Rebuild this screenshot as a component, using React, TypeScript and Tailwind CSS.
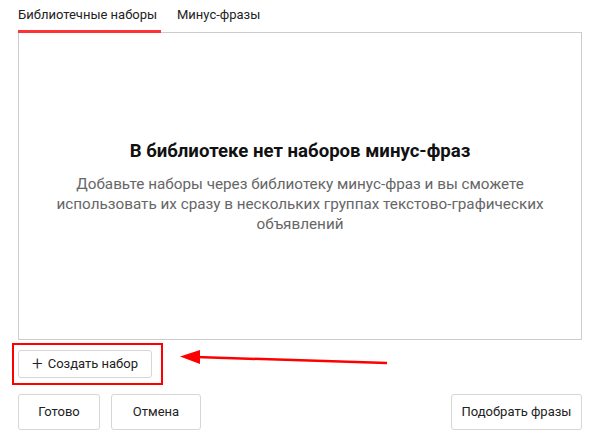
import React from 'react';

const font = { fontFamily: 'Roboto, "Noto Sans", sans-serif' };

export default function App() {
  return (
    <div className="relative w-[600px] h-[444px] bg-white text-[#222]" style={font}>
      <div className="px-[18px]">
        {/* Tabs */}
        <div className="flex h-[33px] items-start">
          <div className="flex flex-col">
            <span className="text-[13px] leading-[16px] pt-[7px] h-[30px]">Библиотечные наборы</span>
            <div className="h-[3px] w-[143px] bg-[#f33]" />
          </div>
          <div className="flex flex-col flex-1">
            <span className="text-[13px] leading-[16px] pt-[7px] h-[30px] pl-[16px]">Минус-фразы</span>
            <div className="h-[3px] flex flex-col justify-end"><div className="h-px bg-[#ccc]" /></div>
          </div>
        </div>

        {/* Panel */}
        <div className="h-[307px] border border-t-0 border-[#ccc] flex flex-col items-center pt-[106px]">
          <h2 className="text-[18.6px] font-bold leading-[24px] text-[#111]">В библиотеке нет наборов минус-фраз</h2>
          <p className="mt-[11px] w-[510px] text-center text-[15.25px] leading-[20px] text-[#666]">
            Добавьте наборы через библиотеку минус-фраз и вы сможете использовать их сразу в нескольких группах{' '}
            <span className="whitespace-nowrap">текстово-графических</span> объявлений
          </p>
        </div>

        {/* Create */}
        <div className="mt-[10px]">
          <button className="h-[28px] w-[134px] border border-[#d6d6d6] rounded-[3px] text-[13px] flex items-center justify-center gap-[5px]">
            <span className="text-[19px] leading-none font-light -mt-[2px]">+</span>
            <span>Создать набор</span>
          </button>
        </div>

        {/* Footer */}
        <div className="mt-[16px] flex items-center">
          <button className="h-[36px] w-[82px] border border-[#d6d6d6] rounded-[3px] text-[13px]">Готово</button>
          <button className="ml-[11px] h-[36px] w-[90px] border border-[#d6d6d6] rounded-[3px] text-[13px]">Отмена</button>
          <button className="ml-auto h-[36px] w-[131px] border border-[#d6d6d6] rounded-[3px] text-[13px]">Подобрать фразы</button>
        </div>
      </div>

      {/* Annotation */}
      <div className="absolute left-[12px] top-[343px] w-[151px] h-[42px] border-2 border-[#f00]" />
      <svg className="absolute left-0 top-0" width="600" height="444">
        <line x1="387" y1="363" x2="196" y2="357" stroke="#f00" strokeWidth="2.5" />
        <polygon points="180,356.5 200,350 200,364" fill="#f00" />
      </svg>
    </div>
  );
}
